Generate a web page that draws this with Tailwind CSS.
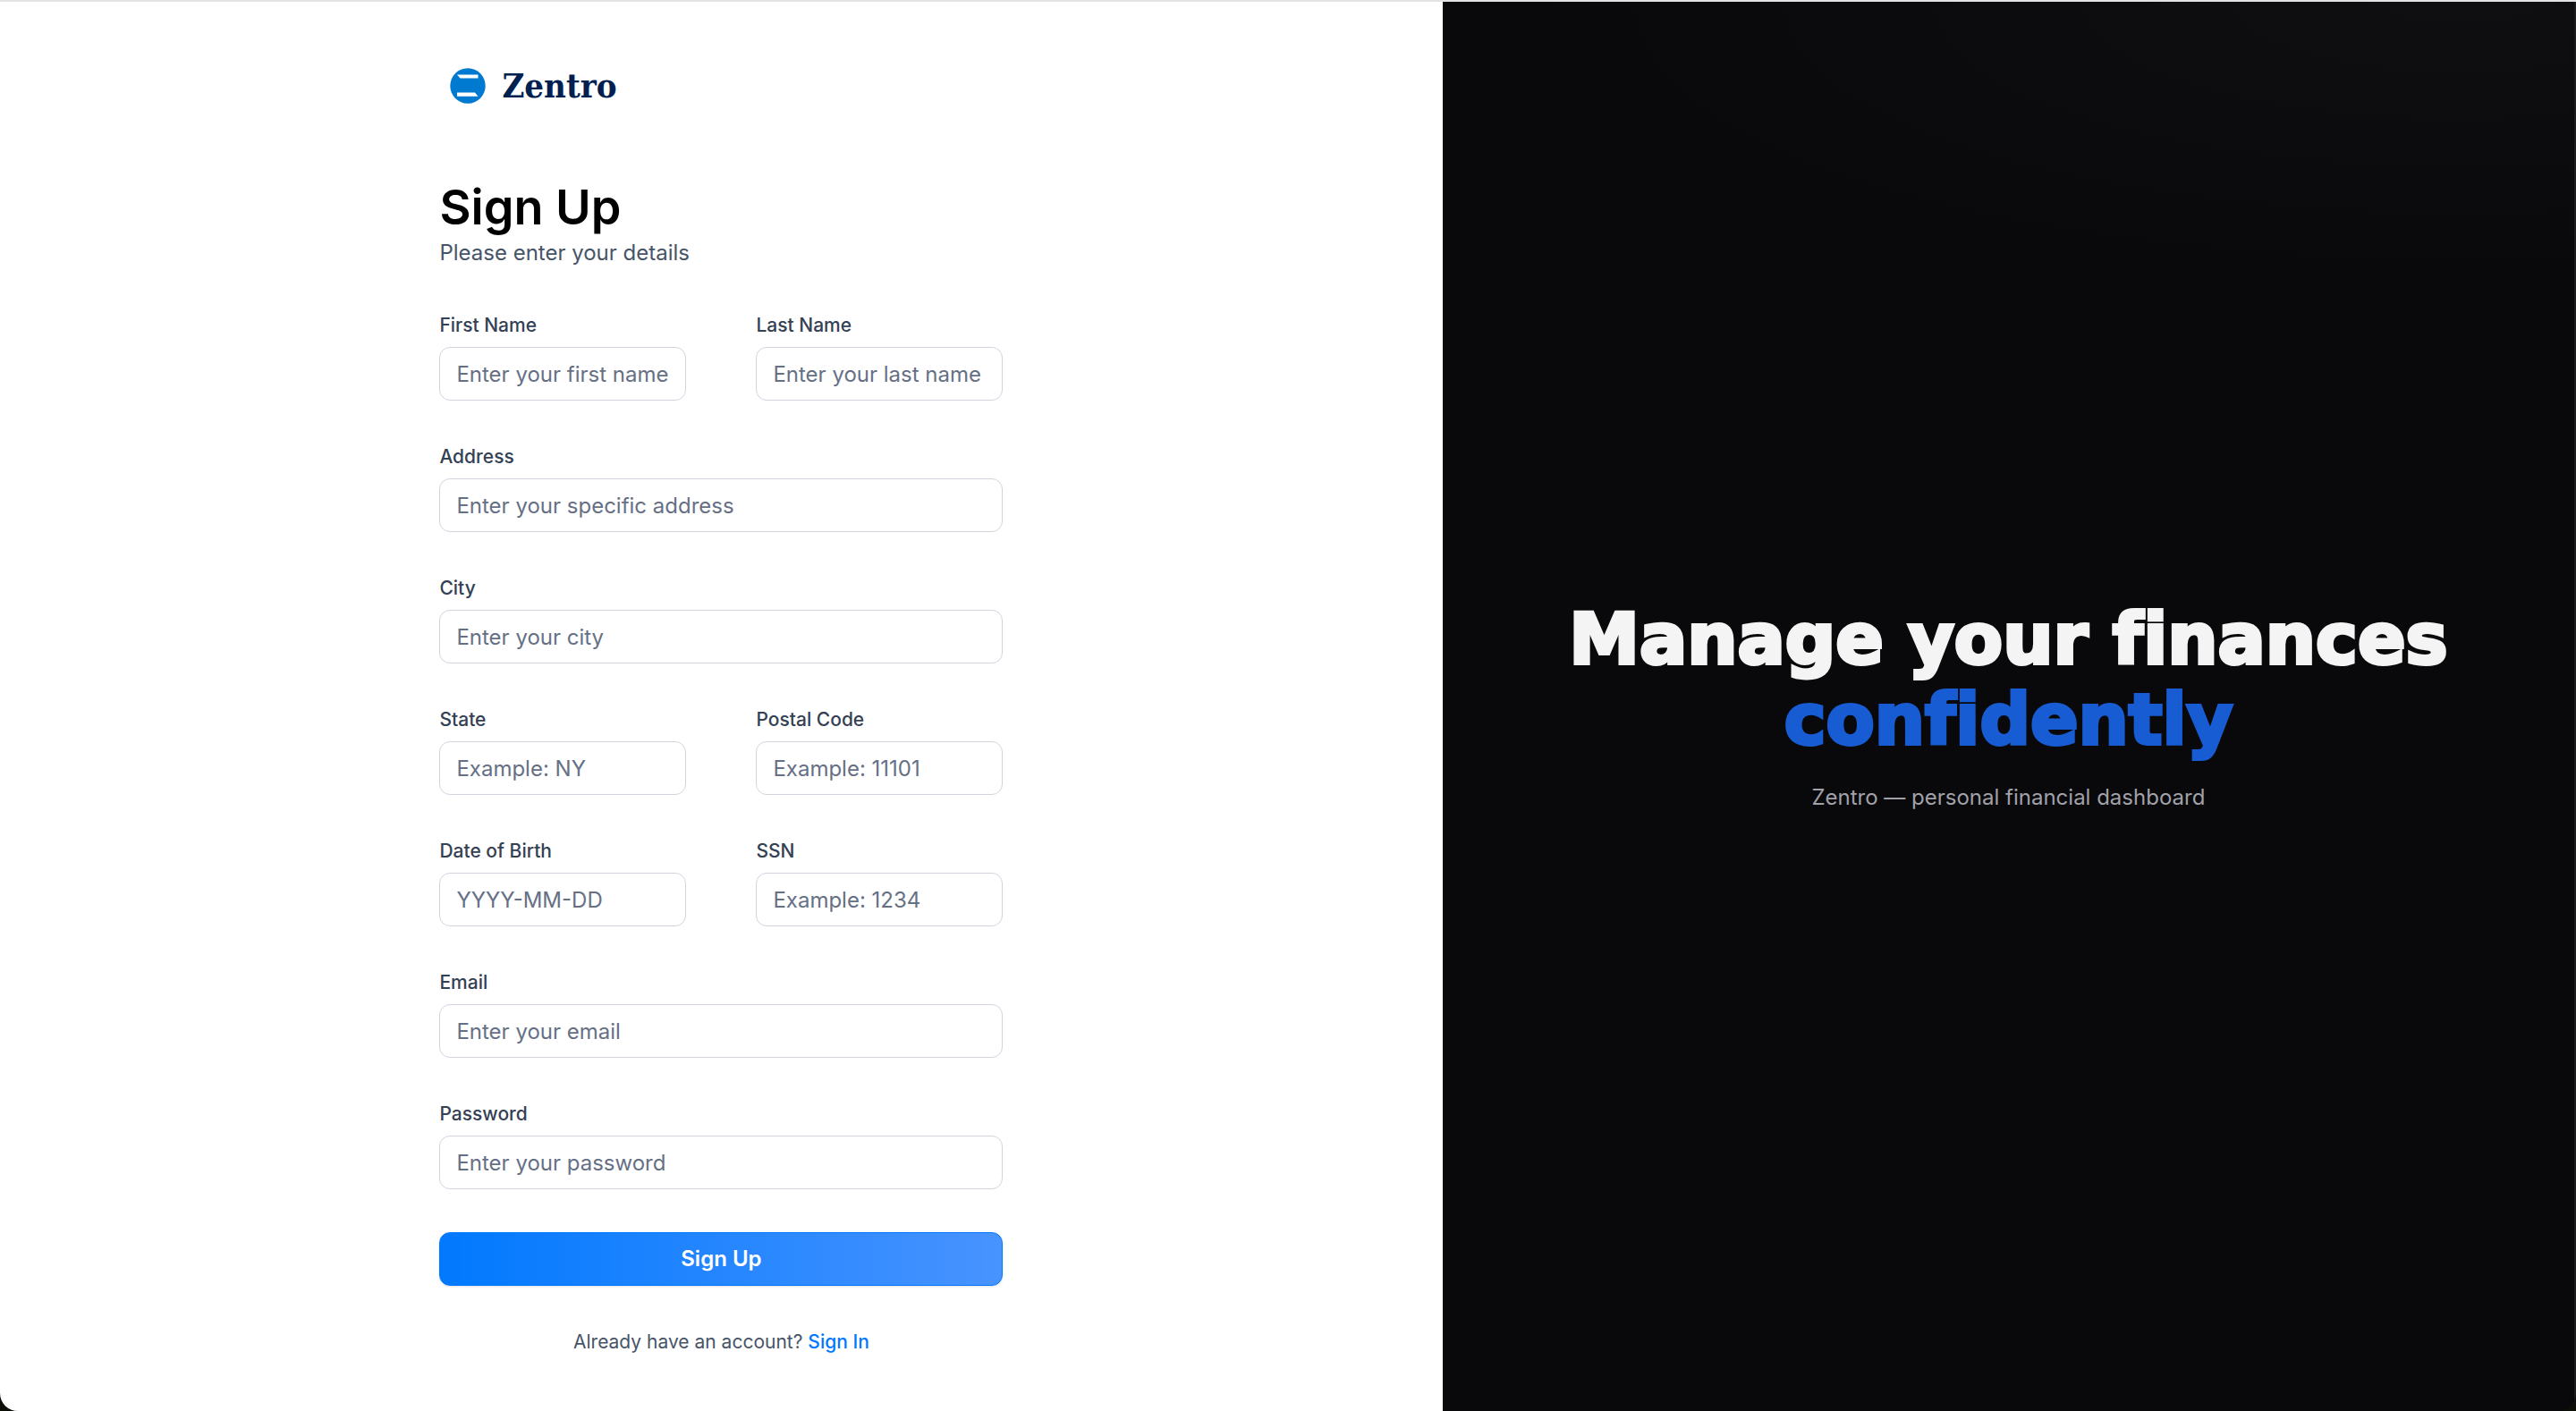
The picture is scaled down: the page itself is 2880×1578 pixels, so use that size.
<!DOCTYPE html>
<html lang="en">
<head>
<meta charset="utf-8">
<title>Zentro – Sign Up</title>
<script src="https://cdn.jsdelivr.net/npm/@tailwindcss/browser@4"></script>
</head>
<body class="min-h-screen bg-[#0b0f08] font-['Inter',sans-serif]">
<div class="flex min-h-screen overflow-hidden rounded-b-[20px] border-t-2 border-[#e2e3e2] bg-[#09090b]">
  <main class="flex w-[56%] flex-col items-center bg-white pt-[66px] pb-12">
    <div class="w-full max-w-[630px]">
      <header class="flex h-14 items-center gap-[18px] pl-3">
        <svg class="size-10" viewBox="0 0 40 40" aria-hidden="true">
          <circle cx="20" cy="20" r="19.7" fill="#0079d0"/>
          <path d="M8 7.5H31.5V11.5H11.5Z M8 27.5H28L31.5 31.8H8Z" fill="#fff"/>
        </svg>
        <span class="font-['DejaVu_Serif_Condensed','DejaVu_Serif',serif] text-[38px] leading-none font-bold text-[#00214f]">Zentro</span>
      </header>
      <h1 class="mt-[75px] text-[54px] leading-[66px] font-semibold text-black">Sign Up</h1>
      <p class="text-2xl leading-9 text-[#475467]">Please enter your details</p>
      <form class="mt-12 flex flex-col gap-12">
        <div class="flex flex-col gap-12">
          <div class="grid grid-cols-2 gap-[78px]">
            <div class="flex flex-col gap-[9px]">
              <label for="first" class="text-[21px] leading-[30px] font-medium text-[#344054]">First Name</label>
              <input id="first" type="text" placeholder="Enter your first name" class="h-[60px] w-full rounded-xl border border-[#d0d5dd] px-[18px] text-2xl text-gray-900 placeholder:text-[#667085]">
            </div>
            <div class="flex flex-col gap-[9px]">
              <label for="last" class="text-[21px] leading-[30px] font-medium text-[#344054]">Last Name</label>
              <input id="last" type="text" placeholder="Enter your last name" class="h-[60px] w-full rounded-xl border border-[#d0d5dd] px-[18px] text-2xl text-gray-900 placeholder:text-[#667085]">
            </div>
          </div>
          <div class="flex flex-col gap-[9px]">
            <label for="address" class="text-[21px] leading-[30px] font-medium text-[#344054]">Address</label>
            <input id="address" type="text" placeholder="Enter your specific address" class="h-[60px] w-full rounded-xl border border-[#d0d5dd] px-[18px] text-2xl text-gray-900 placeholder:text-[#667085]">
          </div>
          <div class="flex flex-col gap-[9px]">
            <label for="city" class="text-[21px] leading-[30px] font-medium text-[#344054]">City</label>
            <input id="city" type="text" placeholder="Enter your city" class="h-[60px] w-full rounded-xl border border-[#d0d5dd] px-[18px] text-2xl text-gray-900 placeholder:text-[#667085]">
          </div>
          <div class="grid grid-cols-2 gap-[78px]">
            <div class="flex flex-col gap-[9px]">
              <label for="state" class="text-[21px] leading-[30px] font-medium text-[#344054]">State</label>
              <input id="state" type="text" placeholder="Example: NY" class="h-[60px] w-full rounded-xl border border-[#d0d5dd] px-[18px] text-2xl text-gray-900 placeholder:text-[#667085]">
            </div>
            <div class="flex flex-col gap-[9px]">
              <label for="postal" class="text-[21px] leading-[30px] font-medium text-[#344054]">Postal Code</label>
              <input id="postal" type="text" placeholder="Example: 11101" class="h-[60px] w-full rounded-xl border border-[#d0d5dd] px-[18px] text-2xl text-gray-900 placeholder:text-[#667085]">
            </div>
          </div>
          <div class="grid grid-cols-2 gap-[78px]">
            <div class="flex flex-col gap-[9px]">
              <label for="dob" class="text-[21px] leading-[30px] font-medium text-[#344054]">Date of Birth</label>
              <input id="dob" type="text" placeholder="YYYY-MM-DD" class="h-[60px] w-full rounded-xl border border-[#d0d5dd] px-[18px] text-2xl text-gray-900 placeholder:text-[#667085]">
            </div>
            <div class="flex flex-col gap-[9px]">
              <label for="ssn" class="text-[21px] leading-[30px] font-medium text-[#344054]">SSN</label>
              <input id="ssn" type="text" placeholder="Example: 1234" class="h-[60px] w-full rounded-xl border border-[#d0d5dd] px-[18px] text-2xl text-gray-900 placeholder:text-[#667085]">
            </div>
          </div>
          <div class="flex flex-col gap-[9px]">
            <label for="email" class="text-[21px] leading-[30px] font-medium text-[#344054]">Email</label>
            <input id="email" type="email" placeholder="Enter your email" class="h-[60px] w-full rounded-xl border border-[#d0d5dd] px-[18px] text-2xl text-gray-900 placeholder:text-[#667085]">
          </div>
          <div class="flex flex-col gap-[9px]">
            <label for="password" class="text-[21px] leading-[30px] font-medium text-[#344054]">Password</label>
            <input id="password" type="password" placeholder="Enter your password" class="h-[60px] w-full rounded-xl border border-[#d0d5dd] px-[18px] text-2xl text-gray-900 placeholder:text-[#667085]">
          </div>
        </div>
        <button type="submit" class="h-[60px] w-full rounded-xl border border-[#0179fe] bg-linear-to-r/srgb from-[#0179fe] to-[#4893ff] text-2xl font-semibold text-white shadow-sm">Sign Up</button>
      </form>
      <p class="mt-12 text-center text-[21px] leading-[30px] text-[#475467]">Already have an account? <a href="#" class="font-medium text-[#0179fe]">Sign In</a></p>
    </div>
  </main>
  <aside class="flex flex-1 flex-col items-center justify-center border-r-2 border-[#1c1c1c] bg-[#09090b] bg-[radial-gradient(ellipse_80%_20%_at_90%_0%,#0f0f11,#09090b)] text-center">
    <h2 class="font-['DejaVu_Sans',sans-serif] text-[79px] leading-[90px] font-bold text-[#f4f4f5] [font-variant-ligatures:none] [-webkit-text-stroke:4px_currentColor]">Manage your finances<br><span class="text-[#175cd3]">confidently</span></h2>
    <p class="mt-6 text-2xl leading-9 text-[#a1a1aa]">Zentro — personal financial dashboard</p>
  </aside>
</div>
</body>
</html>
